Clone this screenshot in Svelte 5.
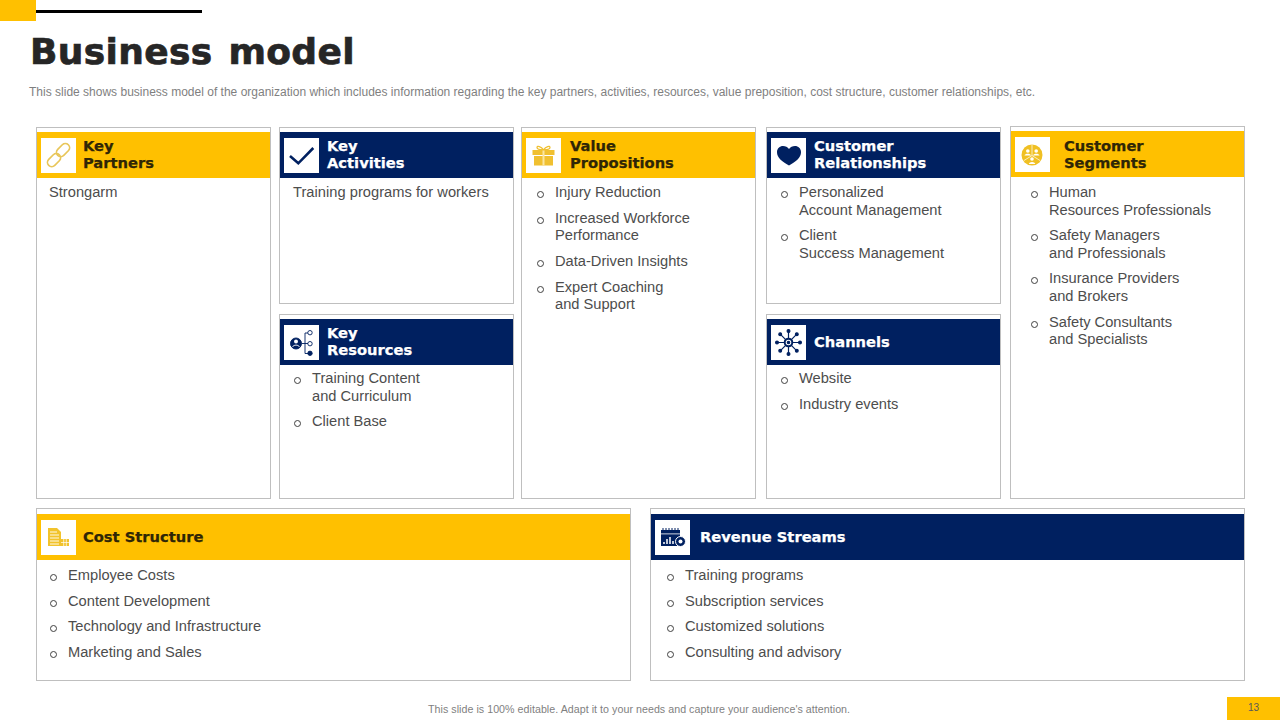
<script lang="ts">
	const partners = ['Strongarm'];
	const value = [['Injury Reduction'], ['Increased Workforce', 'Performance'], ['Data-Driven Insights'], ['Expert Coaching', 'and Support']];
	const relationships = [['Personalized', 'Account Management'], ['Client', 'Success Management']];
	const segments = [['Human', 'Resources Professionals'], ['Safety Managers', 'and Professionals'], ['Insurance Providers', 'and Brokers'], ['Safety Consultants', 'and Specialists']];
	const resources = [['Training Content', 'and Curriculum'], ['Client Base']];
	const channels = [['Website'], ['Industry events']];
	const costs = ['Employee Costs', 'Content Development', 'Technology and Infrastructure', 'Marketing and Sales'];
	const revenue = ['Training programs', 'Subscription services', 'Customized solutions', 'Consulting and advisory'];
</script>

{#snippet bullets(items, cls = '')}
	<ul class="list {cls}">
		{#each items as lines}
			<li>
				{#each [lines].flat() as line}
					<span class="line">{line}</span>
				{/each}
			</li>
		{/each}
	</ul>
{/snippet}

<div class="slide">
	<div class="topbar">
		<div class="tab"></div>
		<div class="rule"></div>
	</div>
	<h1>Business model</h1>
	<p class="sub">This slide shows business model of the organization which includes information regarding the key partners, activities, resources, value preposition, cost structure, customer relationships, etc.</p>

	<div class="canvas">
		<div class="upper">
			<section class="card tall c1">
				<header class="head yellow">
					<div class="ico">
						<svg viewBox="0 0 35 35" width="35" height="35" fill="none" stroke="#e8c65a" stroke-width="1.700">
							<rect x="17.800" y="4.500" width="8.500" height="15" rx="4.250" transform="rotate(45 22 12)" />
							<rect x="8.800" y="14.500" width="8.500" height="15" rx="4.250" transform="rotate(45 13 22)" />
						</svg>
					</div>
					<h2 class="tight">Key<br />Partners</h2>
				</header>
				<p class="plain">{partners[0]}</p>
			</section>

			<div class="stack c2">
				<section class="card top">
					<header class="head navy">
						<div class="ico">
							<svg viewBox="0 0 35 35" width="35" height="35" fill="none" stroke="#002060" stroke-width="2.600">
								<path d="M6 18l8.300 7.300L29.300 10" />
							</svg>
						</div>
						<h2>Key<br />Activities</h2>
					</header>
					<p class="plain shifted">Training programs for workers</p>
				</section>
				<section class="card bottom">
					<header class="head navy">
						<div class="ico">
							<svg viewBox="0 0 35 35" width="35" height="35" fill="none" stroke="#002060" stroke-width="0.900">
								<circle cx="12" cy="18.500" r="5.500" fill="#002060" />
								<circle cx="12" cy="16.500" r="2" fill="#fff" stroke="none" />
								<path d="M8.500 22c1-2.500 6-2.500 7 0" stroke="#fff" />
								<path d="M17.500 18.500h6.500M21 8v20.500M21 8h3M21 28.500h3" />
								<circle cx="26" cy="7.700" r="2.200" />
								<circle cx="26" cy="18.700" r="2.200" />
								<circle cx="26" cy="28.300" r="2.200" fill="#002060" />
							</svg>
						</div>
						<h2>Key<br />Resources</h2>
					</header>
					{@render bullets(resources)}
				</section>
			</div>

			<section class="card tall c3">
				<header class="head yellow">
					<div class="ico">
						<svg viewBox="0 0 35 35" width="35" height="35" fill="#f0c030">
							<path d="M6.500 12h22v5h-22zM8 18h19v9.500H8z" />
							<rect x="16.500" y="12" width="2" height="15.500" fill="#fbe6a0" />
							<path d="M17.500 11.800c-2.500-3.500-6.500-4.500-6.500-2.300 0 1.800 3.500 2.300 6.500 2.300zM17.500 11.800c2.500-3.500 6.500-4.500 6.500-2.300 0 1.800-3.500 2.300-6.500 2.300z" fill="none" stroke="#f0c030" stroke-width="1.300" />
						</svg>
					</div>
					<h2 class="wider">Value<br />Propositions</h2>
				</header>
				{@render bullets(value, 'wide')}
			</section>

			<div class="stack c4">
				<section class="card top">
					<header class="head navy">
						<div class="ico">
							<svg viewBox="0 0 35 35" width="35" height="35" fill="#002060">
								<path d="M18 27.500C11 23.500 6 19.500 6 14.200 6 10.500 8.800 8 12 8c2.500 0 4.700 1 6 3 1.300-2 3.500-3 6-3 3.200 0 6 2.500 6 6.200 0 5.300-5 9.300-12 13.300z" />
							</svg>
						</div>
						<h2>Customer<br />Relationships</h2>
					</header>
					{@render bullets(relationships, 'down')}
				</section>
				<section class="card bottom">
					<header class="head navy">
						<div class="ico">
							<svg viewBox="0 0 35 35" width="35" height="35" fill="#002060" stroke="#002060" stroke-width="1.200">
								<path d="M17.500 6v23M6 17.500h23M9.200 9.200l16.600 16.600M25.800 9.200L9.200 25.800" />
								<circle cx="17.500" cy="17.500" r="3.800" fill="#fff" stroke-width="2" />
								<circle cx="17.500" cy="17.500" r="1.200" />
								<circle cx="17.500" cy="6" r="1.400" />
								<circle cx="17.500" cy="29" r="1.400" />
								<circle cx="6" cy="17.500" r="1.400" />
								<circle cx="29" cy="17.500" r="1.400" />
								<circle cx="9.200" cy="9.200" r="1.400" />
								<circle cx="25.800" cy="9.200" r="1.400" />
								<circle cx="9.200" cy="25.800" r="1.400" />
								<circle cx="25.800" cy="25.800" r="1.400" />
							</svg>
						</div>
						<h2>Channels</h2>
					</header>
					{@render bullets(channels)}
				</section>
			</div>

			<section class="card tall c5">
				<header class="head yellow">
					<div class="ico">
						<svg viewBox="0 0 35 35" width="35" height="35">
							<circle cx="17" cy="18" r="10.500" fill="#f0c023" />
							<g fill="#fff">
								<circle cx="12.800" cy="14" r="1.800" />
								<path d="M9.500 18.500c.5-2.400 6-2.400 6.500 0z" />
								<circle cx="21.200" cy="14" r="1.800" />
								<path d="M18 18.500c.5-2.400 6-2.400 6.500 0z" />
								<circle cx="17" cy="22" r="1.800" />
								<path d="M13.800 27c.5-2.800 6-2.800 6.500 0z" />
							</g>
							<path d="M17 7.500v11M17 18.500l-8 5M17 18.500l8 5" stroke="#fff" stroke-width="0.700" />
						</svg>
					</div>
					<h2 class="indent">Customer<br />Segments</h2>
				</header>
				{@render bullets(segments, 'seg')}
			</section>
		</div>

		<div class="lower">
			<section class="card low">
				<header class="head yellow">
					<div class="ico">
						<svg viewBox="0 0 35 35" width="35" height="35" fill="#f2c32c">
							<path d="M7 8h9l4 4v14H7z" />
							<path d="M9 12h7M9 15h9M9 18h9M9 21h9M9 24h9" stroke="#fff" stroke-width="0.900" />
							<rect x="20" y="19" width="8" height="7" />
							<path d="M22.700 19v7M25.300 19v7M20 22.500h8" stroke="#fff" stroke-width="0.700" />
						</svg>
					</div>
					<h2 class="tight">Cost Structure</h2>
				</header>
				{@render bullets(costs, 'even')}
			</section>
			<section class="card low">
				<header class="head navy">
					<div class="ico">
						<svg viewBox="0 0 35 35" width="35" height="35" fill="#002060">
							<path d="M8 8v3M11 8v3M14 8v3M17 8v3M20 8v3M23 8v3" stroke="#002060" stroke-width="1" />
							<path d="M6 10h19v3.500H6z" />
							<path d="M6 14.300h19V26H6z" />
							<path d="M9 24v-2M12 24v-5M15 24v-7M18 24v-3" stroke="#fff" stroke-width="1.500" />
							<circle cx="25.500" cy="21.500" r="5" stroke="#fff" stroke-width="1" />
							<circle cx="25.500" cy="21.500" r="2" fill="#fff" />
						</svg>
					</div>
					<h2 class="wide">Revenue Streams</h2>
				</header>
				{@render bullets(revenue, 'even rev')}
			</section>
		</div>
	</div>

	<footer>
		<span class="note">This slide is 100% editable. Adapt it to your needs and capture your audience's attention.</span>
		<span class="page">13</span>
	</footer>
</div>

<style>
	:global(body) {
		margin: 0;
		background: #fff;
	}
	.slide {
		width: 1280px;
		height: 720px;
		overflow: hidden;
		display: flex;
		flex-direction: column;
		font-family: 'Liberation Sans', Arial, sans-serif;
		color: #4d4d4d;
	}
	.topbar {
		display: flex;
		height: 21px;
		flex-shrink: 0;
	}
	.tab {
		width: 36px;
		background: #ffc000;
	}
	.rule {
		width: 166px;
		height: 3px;
		margin-top: 10px;
		background: #000;
	}
	h1 {
		margin: 9px 0 0 30px;
		font: bold 36px/44px 'DejaVu Sans', sans-serif;
		color: #262626;
		letter-spacing: 0.35px;
		word-spacing: 3px;
		-webkit-text-stroke: 0.7px #262626;
	}
	.sub {
		margin: 10px 0 0 29px;
		font-size: 12px;
		line-height: 16px;
		color: #7f7f7f;
		letter-spacing: 0.005px;
	}
	.canvas {
		margin: 27px 0 0 36px;
		width: 1209px;
	}
	.upper {
		display: flex;
		height: 372px;
	}
	.c2 {
		margin-left: 8px;
	}
	.c3 {
		margin-left: 7px;
	}
	.c4 {
		margin-left: 10px;
	}
	.c5 {
		margin-left: 9px;
		margin-top: -1px;
		padding-top: 5px;
	}
	.card {
		box-sizing: border-box;
		border: 1px solid #bfbfbf;
		padding-top: 4px;
		background: #fff;
	}
	.tall {
		width: 235px;
	}
	.stack {
		width: 235px;
		display: flex;
		flex-direction: column;
	}
	.top {
		height: 177px;
	}
	.bottom {
		height: 185px;
		margin-top: 10px;
	}
	.head {
		display: flex;
		align-items: center;
		height: 46px;
		padding-left: 4px;
	}
	.yellow {
		background: #ffc000;
		color: #2f2606;
	}
	.navy {
		background: #002060;
		color: #fff;
	}
	.ico {
		width: 35px;
		height: 35px;
		background: #fff;
		flex-shrink: 0;
	}
	.ico svg {
		display: block;
	}
	h2 {
		margin: -2px 0 0 8px;
		font: bold 14.7px/17px 'DejaVu Sans', sans-serif;
		-webkit-text-stroke: 0.25px currentColor;
	}
	h2.tight {
		margin-left: 7px;
	}
	h2.wider {
		margin-left: 9px;
	}
	h2.wide {
		margin-left: 10px;
	}
	h2.indent {
		margin-top: 0;
		margin-left: 14px;
	}
	.plain {
		margin: 5px 0 0 12px;
		font-size: 14.67px;
		line-height: 18px;
	}
	.plain.shifted {
		margin-left: 13px;
		letter-spacing: 0.03px;
	}
	.list {
		list-style: none;
		margin: 5px 0 0;
		padding: 0 0 0 32px;
		font-size: 14.67px;
		line-height: 17.5px;
	}
	.list li {
		position: relative;
		margin-bottom: 8.2px;
	}
	.list li::before {
		content: '';
		position: absolute;
		left: -18px;
		top: 7px;
		box-sizing: border-box;
		width: 7px;
		height: 7px;
		border: 1px solid #404040;
		border-radius: 50%;
	}
	.line {
		display: block;
		white-space: nowrap;
	}
	.list.wide {
		padding-left: 33px;
		margin-top: 6px;
	}
	.list.down {
		margin-top: 6px;
	}
	.list.seg {
		padding-left: 38px;
		margin-top: 7px;
	}
	.lower {
		display: flex;
		gap: 19px;
		margin-top: 9px;
	}
	.low {
		height: 173px;
		flex: 0 0 595px;
		padding-top: 5px;
	}
	.low .head {
		height: 46px;
	}
	.low .list {
		margin-top: 7px;
		padding-left: 31px;
	}
	.low .list.rev {
		padding-left: 34px;
	}
	.low .list li {
		margin-bottom: 8.1px;
	}
	footer {
		margin-top: auto;
		height: 23px;
		display: flex;
		align-items: center;
		flex-shrink: 0;
	}
	.note {
		margin-left: 428px;
		font-size: 10.67px;
		letter-spacing: 0.04px;
		color: #7f7f7f;
	}
	.page {
		margin-left: auto;
		width: 53px;
		height: 23px;
		background: #ffc000;
		font-size: 10px;
		line-height: 22px;
		text-align: center;
		color: #595959;
	}
</style>
